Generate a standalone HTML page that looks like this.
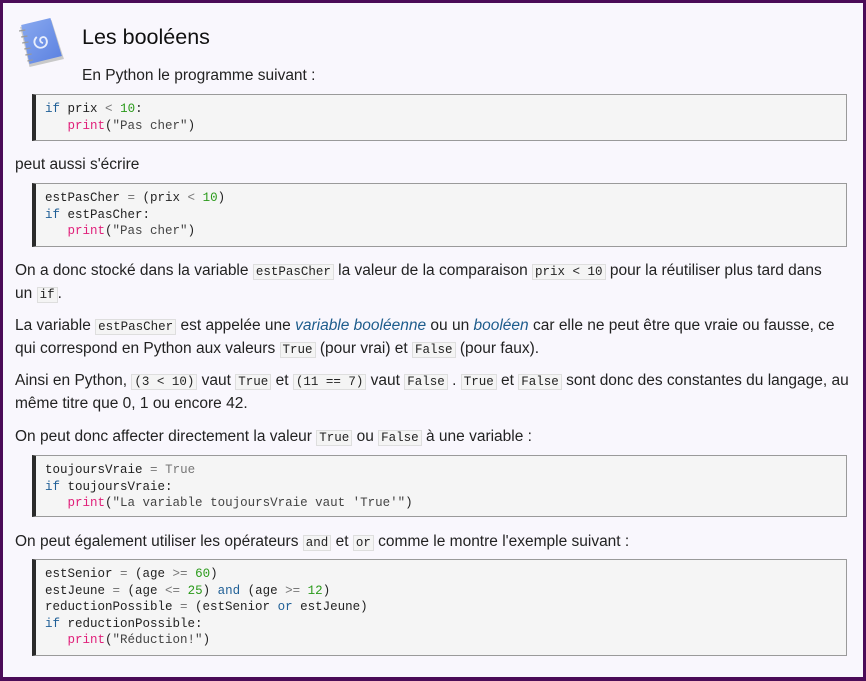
<!DOCTYPE html>
<html><head><meta charset="utf-8"><style>
*{margin:0;padding:0;box-sizing:border-box}
html,body{width:866px;height:681px;overflow:hidden}
body{background:#4b0c58;font-family:"Liberation Sans",sans-serif;color:#222;}
#f{position:absolute;left:3px;top:3px;width:860px;height:674px;background:#f9f7fd}
.a{position:absolute;white-space:nowrap;font-size:15.5px;line-height:21px}
.code{position:absolute;left:29px;width:815px;background:#f5f5f5;border:1px solid #9a9a9a;border-left:4px solid #2b2b2b;font-family:"Liberation Mono",monospace;font-size:12.5px;line-height:16.5px;padding:6px 0 0 9px;color:#222;white-space:pre}
.k{color:#1f5f96}.n{color:#2a9a1a}.p{color:#e0207a}.s{color:#444}.o{color:#777}
code{font-family:"Liberation Mono",monospace;font-size:12.5px;background:#f4f4f4;border:1px solid #dedede;padding:0 2px;}
i{color:#1e5c8c}
</style></head><body><div id="f">
<svg style="position:absolute;left:14px;top:15px" width="48" height="50" viewBox="0 0 46 50" preserveAspectRatio="none">
<defs><linearGradient id="g" x1="0" y1="0" x2="1" y2="1"><stop offset="0" stop-color="#8aaaf0"/><stop offset="1" stop-color="#5a80e0"/></linearGradient></defs>
<path d="M3 9 L33 2 L45 41 L12 49 Z" fill="#c9c9c9"/>
<path d="M4 7 L32 0 L43 38 L12 46 Z" fill="url(#g)"/>
<g stroke="#999" stroke-width="1.3">
<line x1="2" y1="13" x2="8" y2="12"/><line x1="4" y1="19" x2="10" y2="18"/><line x1="5" y1="25" x2="11" y2="24"/><line x1="7" y1="31" x2="13" y2="30"/><line x1="8" y1="37" x2="14" y2="36"/><line x1="10" y1="43" x2="15" y2="42"/></g>
<path d="M25 25 a3 3 0 1 1 3 -4 a6 6 0 1 1 -9 -2" fill="none" stroke="#e8eefc" stroke-width="1.8"/>
</svg>
<div class="a" style="left:79px;top:21px;font-size:21.5px;line-height:27px;color:#111">Les booléens</div>
<div class="a" style="left:79px;top:62px">En Python le programme suivant :</div>
<div class="code" style="top:91px;height:47px"><span class="k">if</span> prix <span class="o">&lt;</span> <span class="n">10</span>:
   <span class="p">print</span>(<span class="s">"Pas cher"</span>)</div>
<div class="a" style="left:12px;top:151px">peut aussi s'écrire</div>
<div class="code" style="top:180px;height:64px">estPasCher <span class="o">=</span> (prix <span class="o">&lt;</span> <span class="n">10</span>)
<span class="k">if</span> estPasCher:
   <span class="p">print</span>(<span class="s">"Pas cher"</span>)</div>
<div class="a" style="left:12px;top:257px">On a donc stocké dans la variable <code>estPasCher</code> la valeur de la comparaison <code>prix &lt; 10</code> pour la réutiliser plus tard dans<br>un <code>if</code>.</div>
<div class="a" style="left:12px;top:312px">La variable <code>estPasCher</code> est appelée une <i>variable booléenne</i> ou un <i>booléen</i> car elle ne peut être que vraie ou fausse, ce<br>qui correspond en Python aux valeurs <code>True</code> (pour vrai) et <code>False</code> (pour faux).</div>
<div class="a" style="left:12px;top:367px">Ainsi en Python, <code>(3 &lt; 10)</code> vaut <code>True</code> et <code>(11 == 7)</code> vaut <code>False</code> . <code>True</code> et <code>False</code> sont donc des constantes du langage, au<br>même titre que 0, 1 ou encore 42.</div>
<div class="a" style="left:12px;top:423px">On peut donc affecter directement la valeur <code>True</code> ou <code>False</code> à une variable :</div>
<div class="code" style="top:452px;height:62px">toujoursVraie <span class="o">=</span> <span class="o">True</span>
<span class="k">if</span> toujoursVraie:
   <span class="p">print</span>(<span class="s">"La variable toujoursVraie vaut 'True'"</span>)</div>
<div class="a" style="left:12px;top:528px">On peut également utiliser les opérateurs <code>and</code> et <code>or</code> comme le montre l'exemple suivant :</div>
<div class="code" style="top:556px;height:97px">estSenior <span class="o">=</span> (age <span class="o">&gt;=</span> <span class="n">60</span>)
estJeune <span class="o">=</span> (age <span class="o">&lt;=</span> <span class="n">25</span>) <span class="k">and</span> (age <span class="o">&gt;=</span> <span class="n">12</span>)
reductionPossible <span class="o">=</span> (estSenior <span class="k">or</span> estJeune)
<span class="k">if</span> reductionPossible:
   <span class="p">print</span>(<span class="s">"Réduction!"</span>)</div>
</div></body></html>
